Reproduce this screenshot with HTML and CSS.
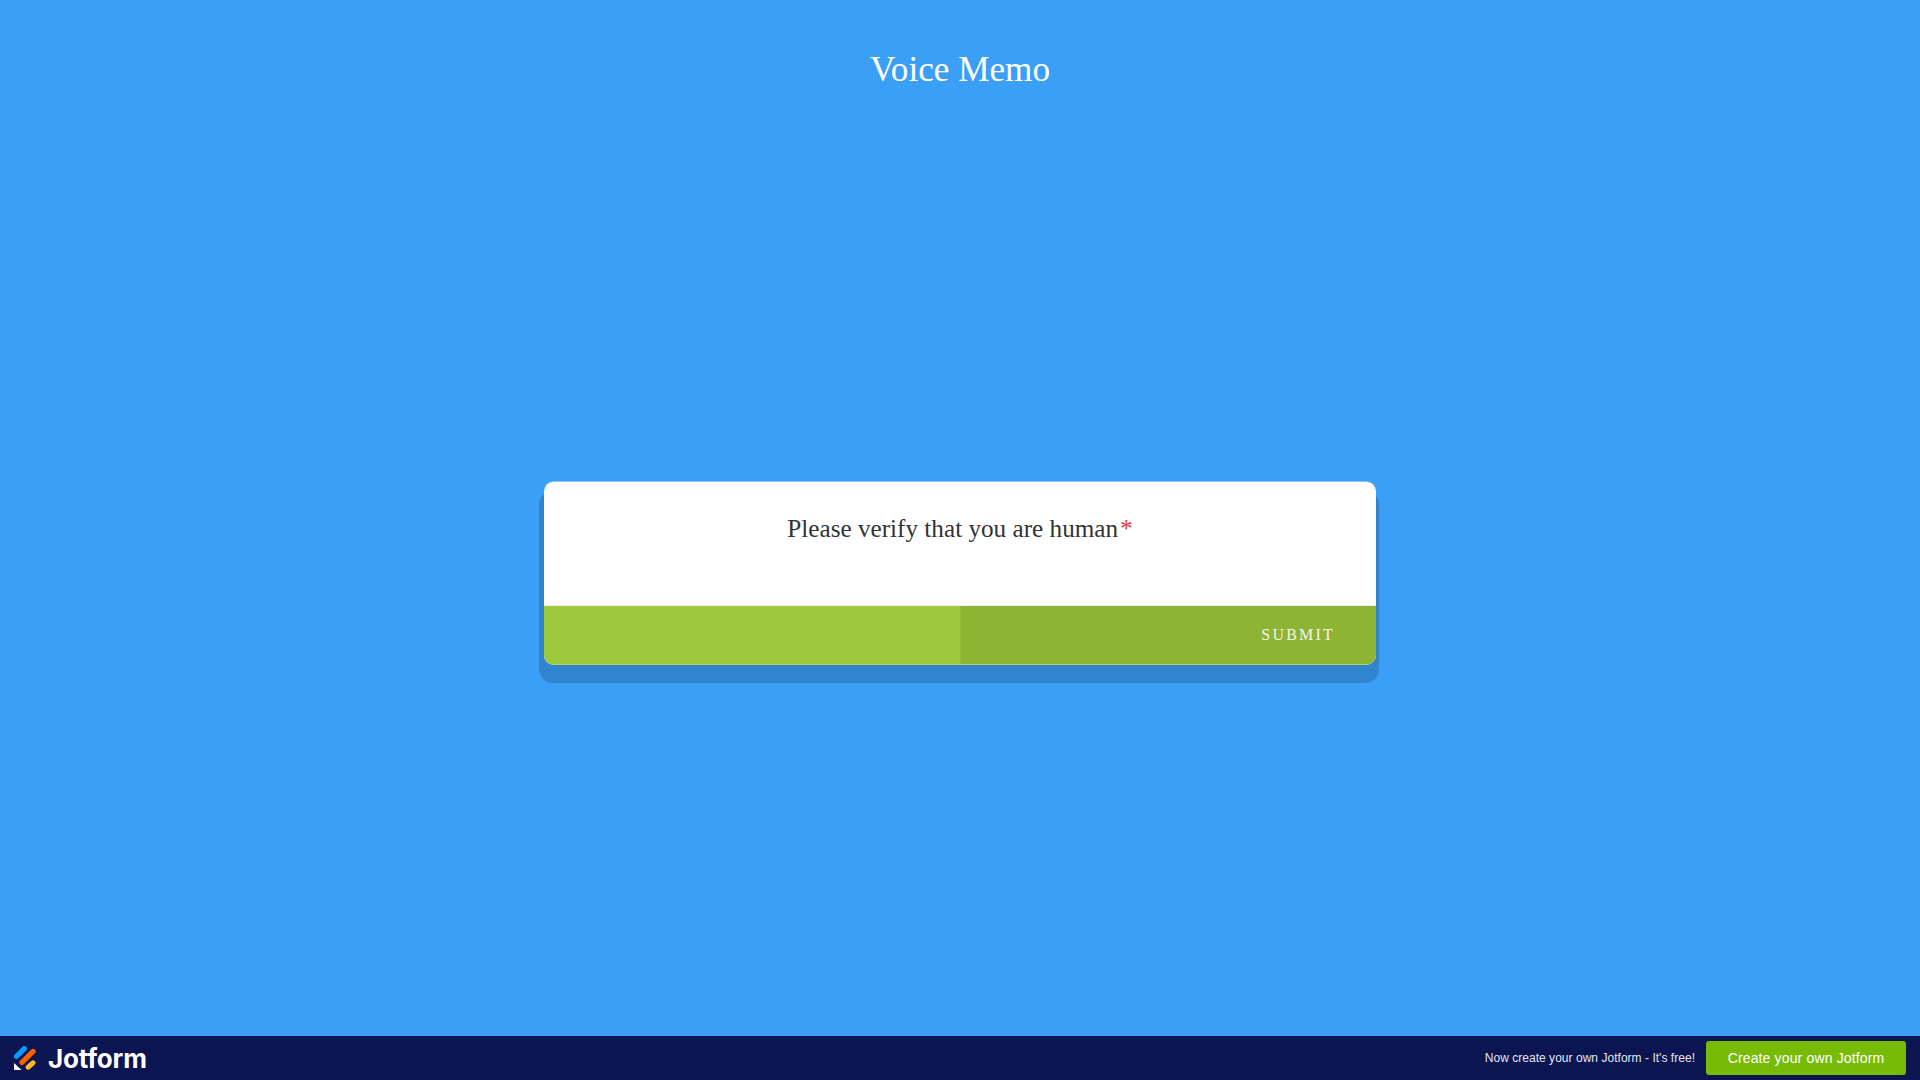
FILE: index.html
```html
<!DOCTYPE html>
<html lang="en">
<head>
<meta charset="utf-8">
<title>Voice Memo</title>
<link rel="stylesheet" href="styles.css">
</head>
<body>
<header class="page-header"><h1 class="page-title">Voice Memo</h1></header>
<main class="page-main">
  <form class="card">
    <div class="question">
      <label class="question-label">Please verify that you are human<span class="required">*</span></label>
    </div>
    <div class="actions">
      <div class="action action-prev"></div>
      <button type="button" class="action action-submit">SUBMIT</button>
    </div>
  </form>
</main>
<footer class="brand-bar">
  <a class="brand" href="#">
    <svg class="brand-mark" viewBox="0 0 22 24" width="22" height="24" aria-hidden="true">
      <path d="M2.6 10.4 10.4 2.6" stroke="#0a9bff" stroke-width="5.2" stroke-linecap="round"/>
      <path d="M8 16.4 19 5.4" stroke="#ff6100" stroke-width="5.2" stroke-linecap="round"/>
      <path d="M14.2 21.2 19 16.8" stroke="#ffb629" stroke-width="5" stroke-linecap="round"/>
      <path d="M0 17 7.5 24H1C.4 24 0 23.6 0 23Z" fill="#ffffff"/>
    </svg>
    <span class="brand-name">Jotform</span>
  </a>
  <div class="promo">
    <span class="promo-text">Now create your own Jotform - It's free!</span>
    <a class="promo-button" href="#">Create your own Jotform</a>
  </div>
</footer>
</body>
</html>
```
FILE: styles.css
```css
* { box-sizing: border-box; }
html, body { height: 100%; }
body {
  margin: 0;
  display: flex;
  flex-direction: column;
  height: 100vh;
  overflow: hidden;
  background: #3b9ff5;
  font-family: "Liberation Serif", "Times New Roman", serif;
}
.page-header { height: 110px; padding-top: 47px; text-align: center; }
.page-title {
  margin: 0;
  font-size: 35.2px;
  line-height: 46px;
  font-weight: 400;
  color: #fff;
}
.page-main {
  flex: 1;
  display: flex;
  align-items: center;
  justify-content: center;
}
.card {
  width: 832px;
  height: 184px;
  display: flex;
  flex-direction: column;
  border-radius: 10px;
  overflow: hidden;
  background: #fff;
  border-top: 1px solid #8cc6f8;
  box-shadow: -1px 14px 0 4px #3185cf;
}
.question {
  flex: 1;
  padding-top: 29px;
  text-align: center;
  border-bottom: 1px solid #f0f0f0;
}
.question-label { font-size: 25.2px; line-height: 36px; color: #333333; }
.required { color: #f23a3c; margin-left: 2px; }
.actions { display: flex; height: 59px; border-bottom: 1px solid #b4cf6f; }
.action { width: 50%; flex: none; border: 0; }
.action-prev { background: #9fc93c; }
.action-submit {
  background: #8eb335;
  border-left: 1px solid #97bb3a;
  padding: 0 41px 0 0;
  text-align: right;
  font-family: inherit;
  font-size: 16px;
  letter-spacing: 2.2px;
  color: #f4f7e6;
}
.brand-bar {
  height: 44px;
  flex: none;
  display: flex;
  align-items: center;
  justify-content: space-between;
  padding: 0 14px 0 14px;
  background: #0a1551;
  font-family: "Liberation Sans", Arial, sans-serif;
}
.brand { display: flex; align-items: center; gap: 12px; text-decoration: none; }
.brand-mark { display: block; }
.brand-name { font-family: Inter, sans-serif; font-size: 26px; font-weight: 700; letter-spacing: -0.2px; color: #fff; }
.promo { display: flex; align-items: center; gap: 11px; }
.promo-text { font-size: 12px; letter-spacing: 0.03px; color: #e3e5ee; }
.promo-button {
  display: flex;
  align-items: center;
  justify-content: center;
  width: 200px;
  height: 34px;
  border-radius: 3px;
  background: #78bb07;
  font-size: 14px;
  letter-spacing: 0.15px;
  color: #fff;
  text-decoration: none;
}
```
